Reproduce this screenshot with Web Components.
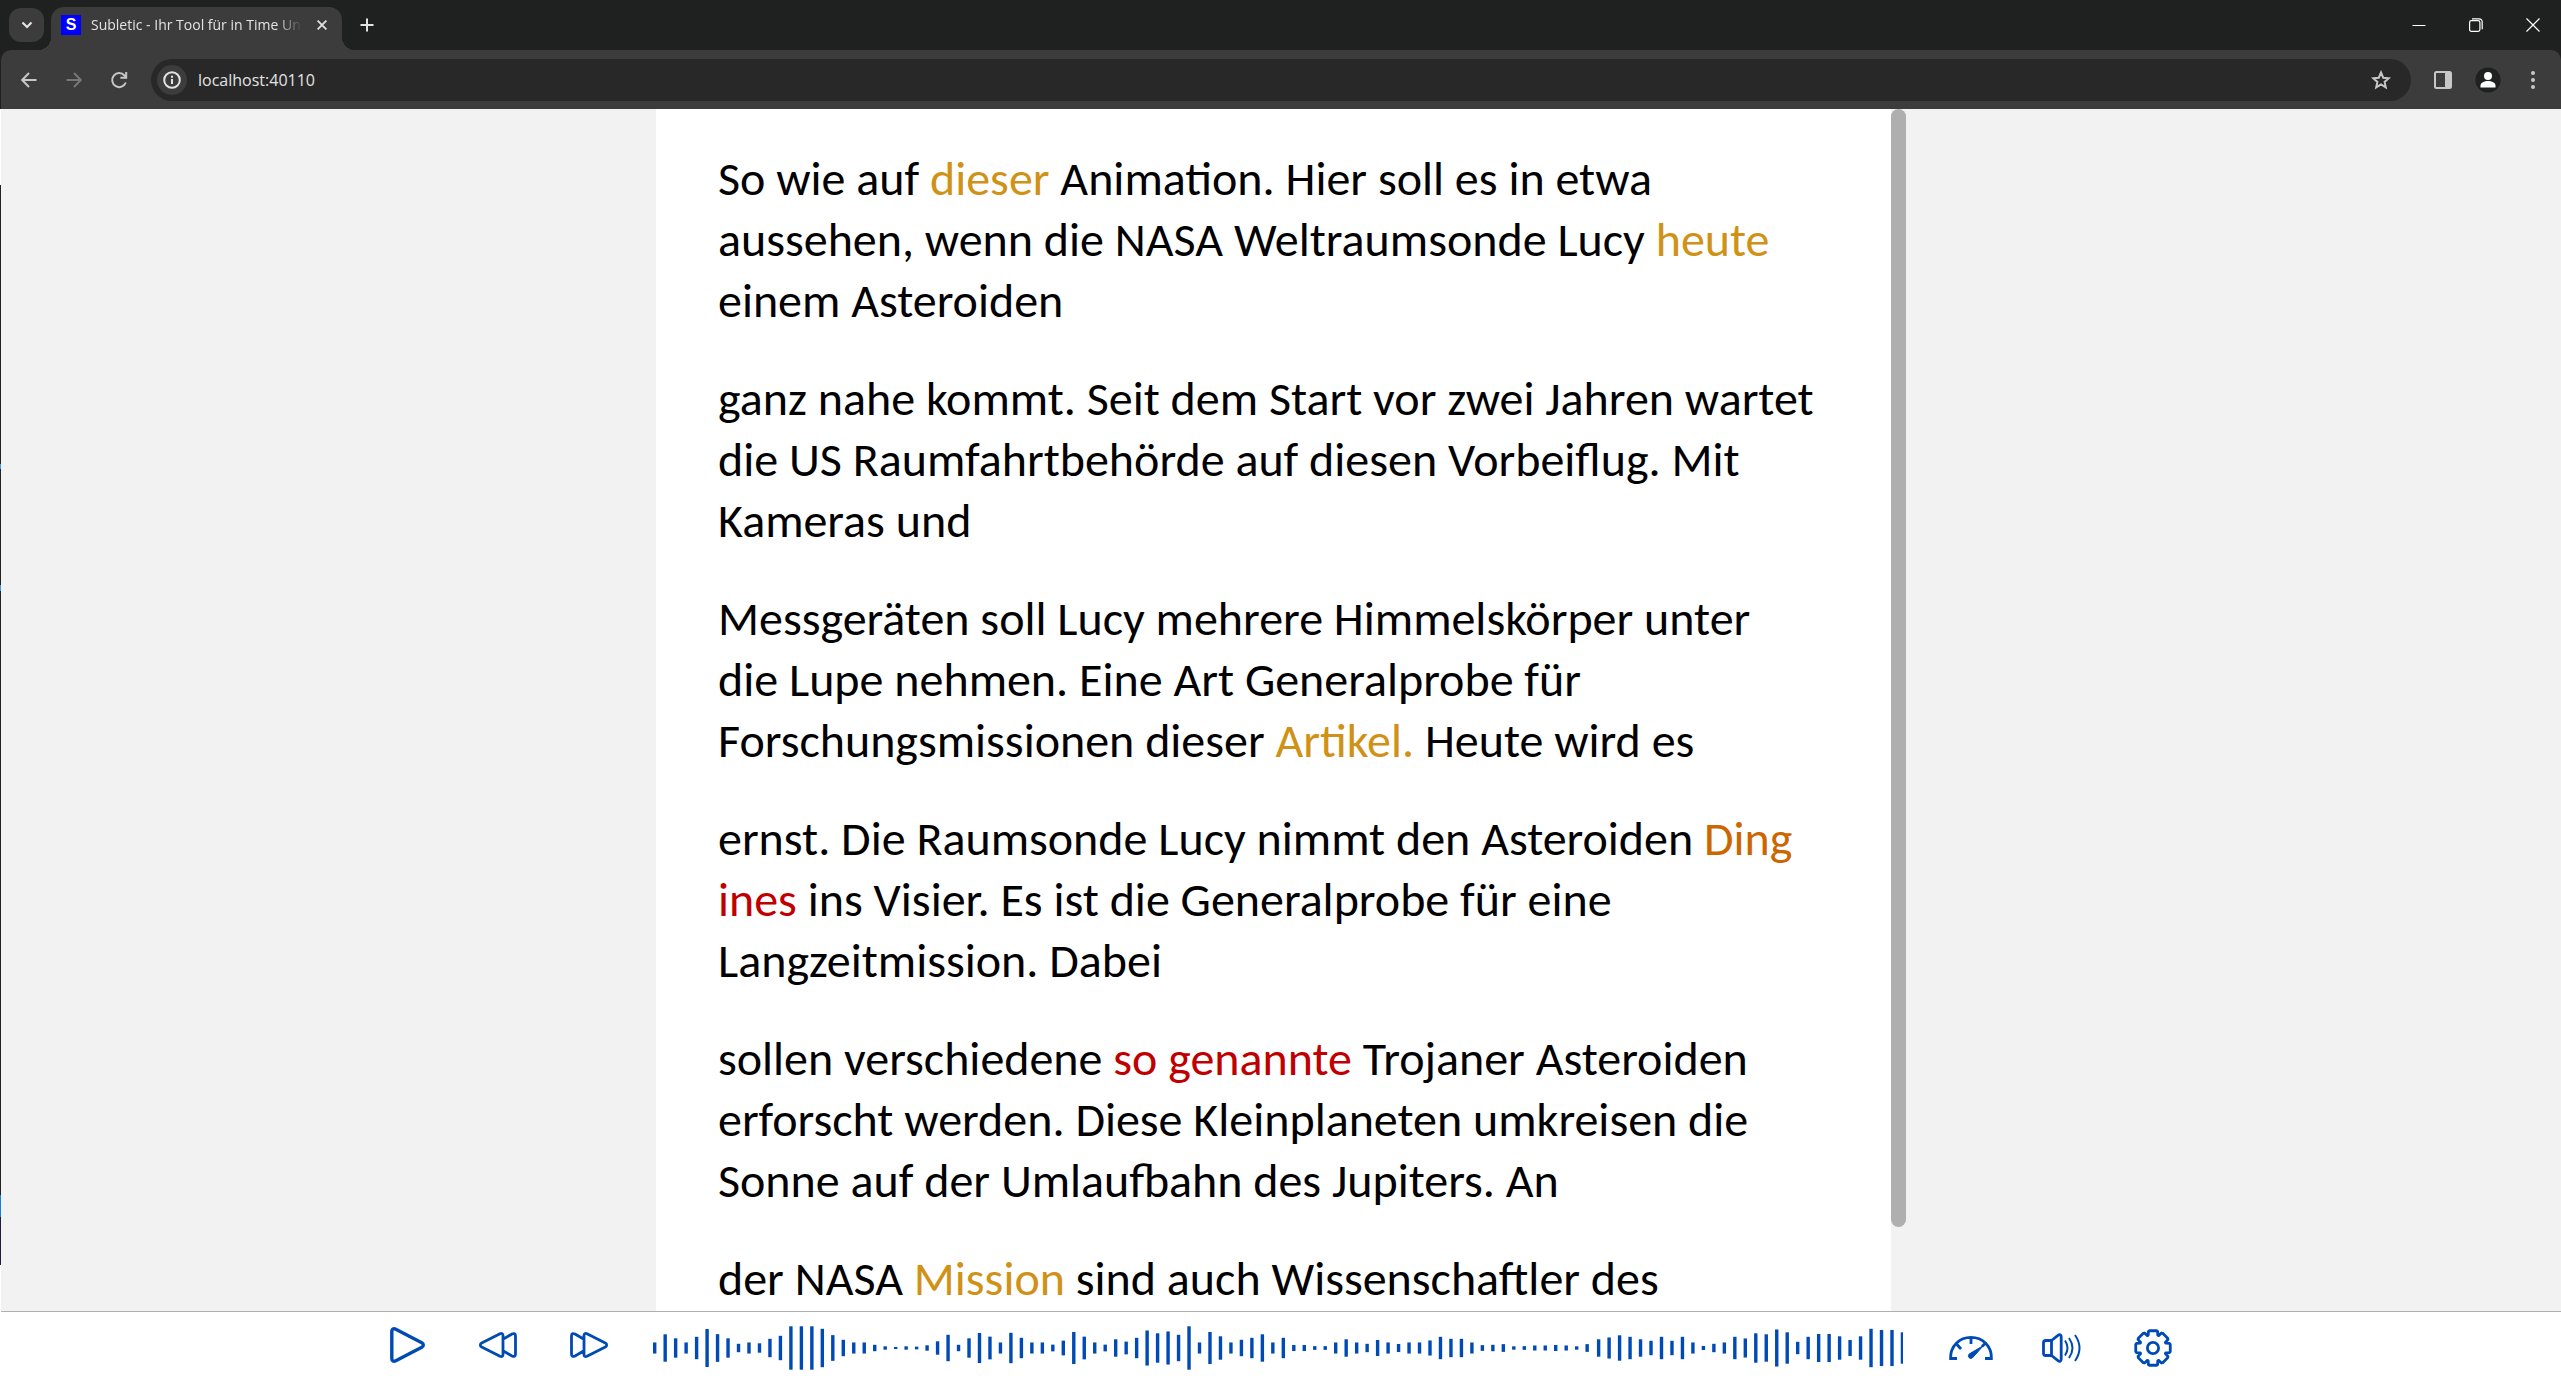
<!DOCTYPE html>
<html lang="de">
<head>
<meta charset="utf-8">
<title>Subletic - Ihr Tool für in Time Untertitelung</title>
<style>
html, body { height: 100%; margin: 0; }
body { display: flex; background: #f2f2f2; font-family: "Open Sans", "Liberation Sans", sans-serif; overflow: hidden; }
</style>
</head>
<body>
<desktop-edge></desktop-edge>
<browser-window>
  <tab-strip slot="chrome"></tab-strip>
  <tool-bar slot="chrome"></tool-bar>
  <caption-editor>
    <p>So wie auf <word-mark level="fair">dieser</word-mark> Animation. Hier soll es in etwa<br>aussehen, wenn die NASA Weltraumsonde Lucy <word-mark level="fair">heute</word-mark><br>einem Asteroiden</p>
    <p>ganz nahe kommt. Seit dem Start vor zwei Jahren wartet<br>die US Raumfahrtbehörde auf diesen Vorbeiflug. Mit<br>Kameras und</p>
    <p>Messgeräten soll Lucy mehrere Himmelskörper unter<br>die Lupe nehmen. Eine Art Generalprobe für<br>Forschungsmissionen dieser <word-mark level="fair">Artikel.</word-mark> Heute wird es</p>
    <p>ernst. Die Raumsonde Lucy nimmt den Asteroiden <word-mark level="poor">Ding</word-mark><br><word-mark level="bad">ines</word-mark> ins Visier. Es ist die Generalprobe für eine<br>Langzeitmission. Dabei</p>
    <p>sollen verschiedene <word-mark level="bad">so genannte</word-mark> Trojaner Asteroiden<br>erforscht werden. Diese Kleinplaneten umkreisen die<br>Sonne auf der Umlaufbahn des Jupiters. An</p>
    <p>der NASA <word-mark level="fair">Mission</word-mark> sind auch Wissenschaftler des</p>
  </caption-editor>
  <player-bar></player-bar>
</browser-window>
<script>
function define(name, markup, setup) {
  const template = document.createElement('template');
  template.innerHTML = markup;
  customElements.define(name, class extends HTMLElement {
    constructor() {
      super();
      this.attachShadow({ mode: 'open' }).append(template.content.cloneNode(true));
      if (setup) setup(this.shadowRoot);
    }
  });
}

define('desktop-edge', `
<style>
:host { flex: none; width: 1px; background: linear-gradient(#1f2020 0 109px, #fff 109px 185px, #222 185px 464px, #3b96f5 464px 469px, #222 469px 585px, #3b96f5 585px 591px, #222 591px 1195px, #0a84d8 1195px 1217px, #201c3a 1217px 1265px, #fff 1265px); }
</style>`);

define('browser-window', `
<style>
:host { flex: 1; min-width: 0; display: flex; flex-direction: column; height: 100vh; }
</style>
<slot name="chrome"></slot><slot></slot>`);

define('tab-strip', `
<style>
:host { flex: none; display: flex; height: 50px; background: #1f2121; color: #e3e3e3; }
button { border: 0; padding: 0; background: none; color: inherit; font: inherit; display: grid; place-items: center; }
svg { fill: none; stroke: currentColor; display: block; }
.search { width: 35px; height: 34px; margin: 8px 7px 0 8px; border-radius: 12px; background: #3c3c3c; }
.tab { position: relative; width: 291px; height: 43px; margin-top: 7px; box-sizing: border-box; padding: 0 10px; border-radius: 13px 13px 0 0; background: #3c3c3c; display: flex; align-items: center; gap: 10px; }
.tab::before, .tab::after { content: ""; position: absolute; bottom: 0; width: 13px; height: 13px; }
.tab::before { right: 100%; background: radial-gradient(circle at 0 0, transparent 13px, #3c3c3c 13px); }
.tab::after { left: 100%; background: radial-gradient(circle at 100% 0, transparent 13px, #3c3c3c 13px); }
.icon { flex: none; width: 20px; height: 20px; margin-bottom: 7px; background: #00f; color: #fff; font: bold 16px/20px "Liberation Sans", sans-serif; text-align: center; }
.title { flex: 1; min-width: 0; margin-bottom: 7px; overflow: hidden; white-space: nowrap; font-size: 14px; line-height: 20px; -webkit-mask-image: linear-gradient(90deg, #000 88%, transparent); mask-image: linear-gradient(90deg, #000 88%, transparent); }
.close { width: 20px; height: 20px; margin-bottom: 7px; }
.new { width: 34px; height: 34px; margin: 8px 0 0 8px; }
.window { display: flex; margin-left: auto; color: #fff; }
.window button { width: 57px; height: 49px; }
</style>
<button class="search" aria-label="Tabs durchsuchen"><svg width="12" height="8" viewBox="0 0 12 8" stroke-width="2.2"><path d="M1.5 1.5 6 6l4.500-4.500"/></svg></button>
<div class="tab"><span class="icon">S</span><span class="title">Subletic - Ihr Tool für in Time Un</span><button class="close" aria-label="Tab schließen"><svg width="10" height="10" viewBox="0 0 10 10" stroke-width="1.800"><path d="m.6.6 8.800 8.800M9.400.6.6 9.400"/></svg></button></div>
<button class="new" aria-label="Neuer Tab"><svg width="14" height="14" viewBox="0 0 14 14" stroke-width="2"><path d="M7 .5v13M.5 7h13"/></svg></button>
<div class="window">
<button aria-label="Minimieren"><svg width="14" height="14" viewBox="0 0 14 14"><path d="M.5 7.500h13"/></svg></button>
<button aria-label="Verkleinern"><svg width="14" height="14" viewBox="0 0 14 14" stroke-width="1.200"><rect x=".6" y="2.600" width="10.300" height="10.800" rx="1.800"/><path d="M3 .8h7.200a3 3 0 0 1 3 3v7.400"/></svg></button>
<button aria-label="Schließen"><svg width="14" height="14" viewBox="0 0 14 14" stroke-width="1.200"><path d="m.5.5 13 13M13.500.5l-13 13"/></svg></button>
</div>`);

define('tool-bar', `
<style>
:host { flex: none; display: flex; background: #1f2121; color: #c7c7c7; }
nav { flex: 1; display: flex; align-items: center; height: 59px; box-sizing: border-box; padding: 0 10px 0 10px; background: #3c3c3c; border-radius: 10px 10px 0 0; }
button { flex: none; width: 36px; height: 36px; border: 0; padding: 0; background: none; color: inherit; display: grid; place-items: center; }
svg { display: block; fill: none; stroke: currentColor; stroke-width: 2; }
svg.solid { fill: currentColor; stroke: none; }
.moves { display: flex; gap: 9px; margin-right: 14px; }
.off { color: #777; }
.address { flex: 1; display: flex; align-items: center; height: 42px; border-radius: 21px; background: #282828; padding: 0 12px 0 6px; gap: 11px; }
.info { width: 30px; height: 30px; border-radius: 50%; background: #3c3c3c; color: #e3e3e3; }
input { flex: 1; min-width: 0; border: 0; padding: 0; background: none; color: #e3e3e3; font: 16px/24px "Open Sans", sans-serif; outline: 0; }
.menus { display: flex; gap: 9px; margin-left: 14px; }
</style>
<nav>
<div class="moves">
<button aria-label="Zurück"><svg width="16" height="16" viewBox="0 0 16 16"><path d="M15.500 8H1.500M8 1 1.200 8 8 15"/></svg></button>
<button class="off" aria-label="Vorwärts"><svg width="16" height="16" viewBox="0 0 16 16"><path d="M.5 8h14M8 1l6.800 7L8 15"/></svg></button>
<button aria-label="Neu laden"><svg width="18" height="18" viewBox="0 0 18 18"><path d="M15.800 11.500A7 7 0 1 1 14.500 4.500L16 6M16.200 1v5.800h-5.800"/></svg></button>
</div>
<div class="address">
<button class="info" aria-label="Websiteinformationen"><svg width="18" height="18" viewBox="0 0 18 18"><circle cx="9" cy="9" r="7.800"/><path d="M9 8v5M9 4.800v2"/></svg></button>
<input aria-label="Adresse" value="localhost:40110">
<button aria-label="Lesezeichen"><svg width="20" height="20" viewBox="0 0 20 20"><path d="m10 2.500 2.200 5.200 5.600.5-4.200 3.700 1.200 5.500-4.800-2.900-4.800 2.900 1.200-5.500L2.200 8.200l5.600-.5z"/></svg></button>
</div>
<div class="menus">
<button aria-label="Seitenleiste"><svg width="20" height="20" viewBox="0 0 20 20"><rect x="2" y="2" width="16" height="16" rx="1.500"/><path fill="currentColor" stroke="none" d="M12 2h6v16h-6z"/></svg></button>
<button aria-label="Profil"><svg class="solid" width="26" height="26" viewBox="0 0 26 26"><circle cx="13" cy="13" r="12.600" fill="#1f2121"/><circle cx="13" cy="9" r="4" fill="#fff"/><path fill="#fff" d="M5.500 20.500v-2c0-3 4-4.500 7.500-4.500s7.500 1.500 7.500 4.500v2z"/></svg></button>
<button aria-label="Menü"><svg class="solid" width="4" height="18" viewBox="0 0 4 18"><circle cx="2" cy="2" r="2"/><circle cx="2" cy="9" r="2"/><circle cx="2" cy="16" r="2"/></svg></button>
</div>
</nav>`);

define('word-mark', `
<style>
:host([level="fair"]) { color: #d09216; }
:host([level="poor"]) { color: #cc6600; }
:host([level="bad"]) { color: #c00000; }
</style><slot></slot>`);

define('caption-editor', `
<style>
:host { flex: 1; min-height: 0; width: 1250px; max-width: 100%; align-self: center; display: flex; overflow: hidden; }
article { flex: 1; min-width: 0; box-sizing: border-box; padding: 39px 62px 0; background: #fff; color: #000; font-family: Carlito, Lato, sans-serif; font-size: 48px; line-height: 61px; overflow: hidden; white-space: nowrap; }
::slotted(p) { margin: 0 0 37px; }
.track { flex: none; width: 15px; }
.thumb { height: 93%; border-radius: 8px; background: #afafaf; }
</style>
<article><slot></slot></article>
<div class="track"><div class="thumb"></div></div>`);

define('player-bar', `
<style>
:host { flex: none; display: flex; justify-content: center; align-items: center; height: 68px; padding-right: 2px; border-top: 1px solid #afafaf; background: #fff; color: #004ab5; }
.group { display: flex; gap: 31px; }
button { width: 60px; height: 60px; border: 0; padding: 0 0 2px; background: none; color: inherit; display: grid; place-items: center; }
svg { display: block; fill: none; stroke: currentColor; stroke-linejoin: round; overflow: visible; }
.wave { flex: none; width: 1250px; height: 44px; margin: 3px 38px 0 34px; stroke: none; fill: currentColor; overflow: hidden; }
.wave + .group button { padding: 3px 0 0; }
</style>
<div class="group">
<button aria-label="Abspielen"><svg width="36" height="38" viewBox="0 0 36 38" stroke-width="3.400"><path d="M2.800 5.500v27c0 2.500 1.800 3.400 4 2.300l26-13.500c2-1 2-3.600 0-4.600L6.800 3.200c-2.200-1.100-4-.2-4 2.300z"/></svg></button>
<button aria-label="Zurückspulen"><svg width="38" height="26" viewBox="0 0 38 26" stroke-width="2.800"><path d="M24 3.600v18.800c0 2-1.300 2.700-3 1.900L2.700 15c-1.800-.9-1.800-3.100 0-4L21 1.700c1.700-.8 3-.1 3 1.900zM24 7.200 33 2c2.200-1 3.500-.2 3.500 2v18c0 2.200-1.300 3-3.500 2l-9-5.200"/></svg></button>
<button aria-label="Vorspulen"><svg width="38" height="26" viewBox="0 0 38 26" stroke-width="2.800"><path d="M14 3.600v18.800c0 2 1.300 2.700 3 1.900L35.300 15c1.800-.9 1.800-3.100 0-4L17 1.700c-1.700-.8-3-.1-3 1.900zM14 7.200 5 2C2.800 1 1.500 1.800 1.500 4v18c0 2.200 1.300 3 3.500 2l9-5.200"/></svg></button>
</div>
<svg class="wave" viewBox="0 0 1250 44" role="img" aria-label="Tonspur"></svg>
<div class="group">
<button aria-label="Geschwindigkeit"><svg width="44" height="26" viewBox="0 0 44 26" stroke-width="2.800"><path stroke-linejoin="miter" d="M8 23.500H1.600C1.200 11 10.500 2.300 22 2.300S42.800 11 42.400 23.500H36M22 2.300V9M8 9.500l4 4.500M36 8.500l-3 3"/><path fill="currentColor" stroke-width="1" d="M34.500 10.500 24 22.200a2.500 2.500 0 1 1-3.500-3.400z"/></svg></button>
<button aria-label="Lautstärke"><svg width="40" height="30" viewBox="0 0 40 30" stroke-width="2.800"><path d="M9.500 7.500H3.800c-1.500 0-2.300.8-2.300 2.300v10.400c0 1.500.8 2.300 2.300 2.300h5.700M9.500 7.500v15l6.500 5.200c1.600 1.200 3.200.5 3.200-1.500V3.800c0-2-1.600-2.700-3.200-1.500z"/><path stroke-width="2" d="M23 7.500q5 7.500 0 15M27 5q7 10 0 20M33 2q9 13 0 26"/></svg></button>
<button aria-label="Einstellungen"><svg width="38" height="38" viewBox="0 0 38 38" stroke-width="2.800"><path id="gear"/><circle cx="19" cy="19" r="5.600"/></svg></button>
</div>`, root => {
  const levels = [35,84,60,35,69,116,85,60,27,35,30,57,75,132,132,132,117,79,51,35,35,21,12,8,12,10,18,42,81,21,60,92,70,35,93,63,35,35,22,
    46,98,70,35,22,54,40,63,107,90,101,81,132,35,98,72,35,51,63,84,35,63,20,20,13,13,35,54,35,27,50,35,26,35,35,47,69,57,57,35,
    19,21,25,12,13,17,17,20,17,12,25,54,65,78,69,54,45,69,45,69,35,14,27,35,69,59,90,84,113,96,39,69,86,86,72,50,72,117,110,110,96];
  root.querySelector('.wave').innerHTML = levels.map((level, i) => {
    const h = level / 3 - 0.6;
    const x = i * 10.477 + (i > 89 ? 1 : 0);
    return `<rect x="${x.toFixed(2)}" y="${(22 - h / 2).toFixed(2)}" width="3.400" height="${h.toFixed(2)}"/>`;
  }).join('');
  let d = '';
  for (let k = 0; k < 8; k++) {
    const a = k * Math.PI / 4;
    for (const [r, t] of [[13.6, -0.36], [17.2, -0.27], [17.6, -0.2], [17.6, 0.2], [17.2, 0.27], [13.6, 0.36]]) {
      d += (d ? 'L' : 'M') + (19 + r * Math.sin(a + t)).toFixed(2) + ' ' + (19 - r * Math.cos(a + t)).toFixed(2);
    }
  }
  root.querySelector('#gear').setAttribute('d', d + 'z');
});
</script>
</body>
</html>
